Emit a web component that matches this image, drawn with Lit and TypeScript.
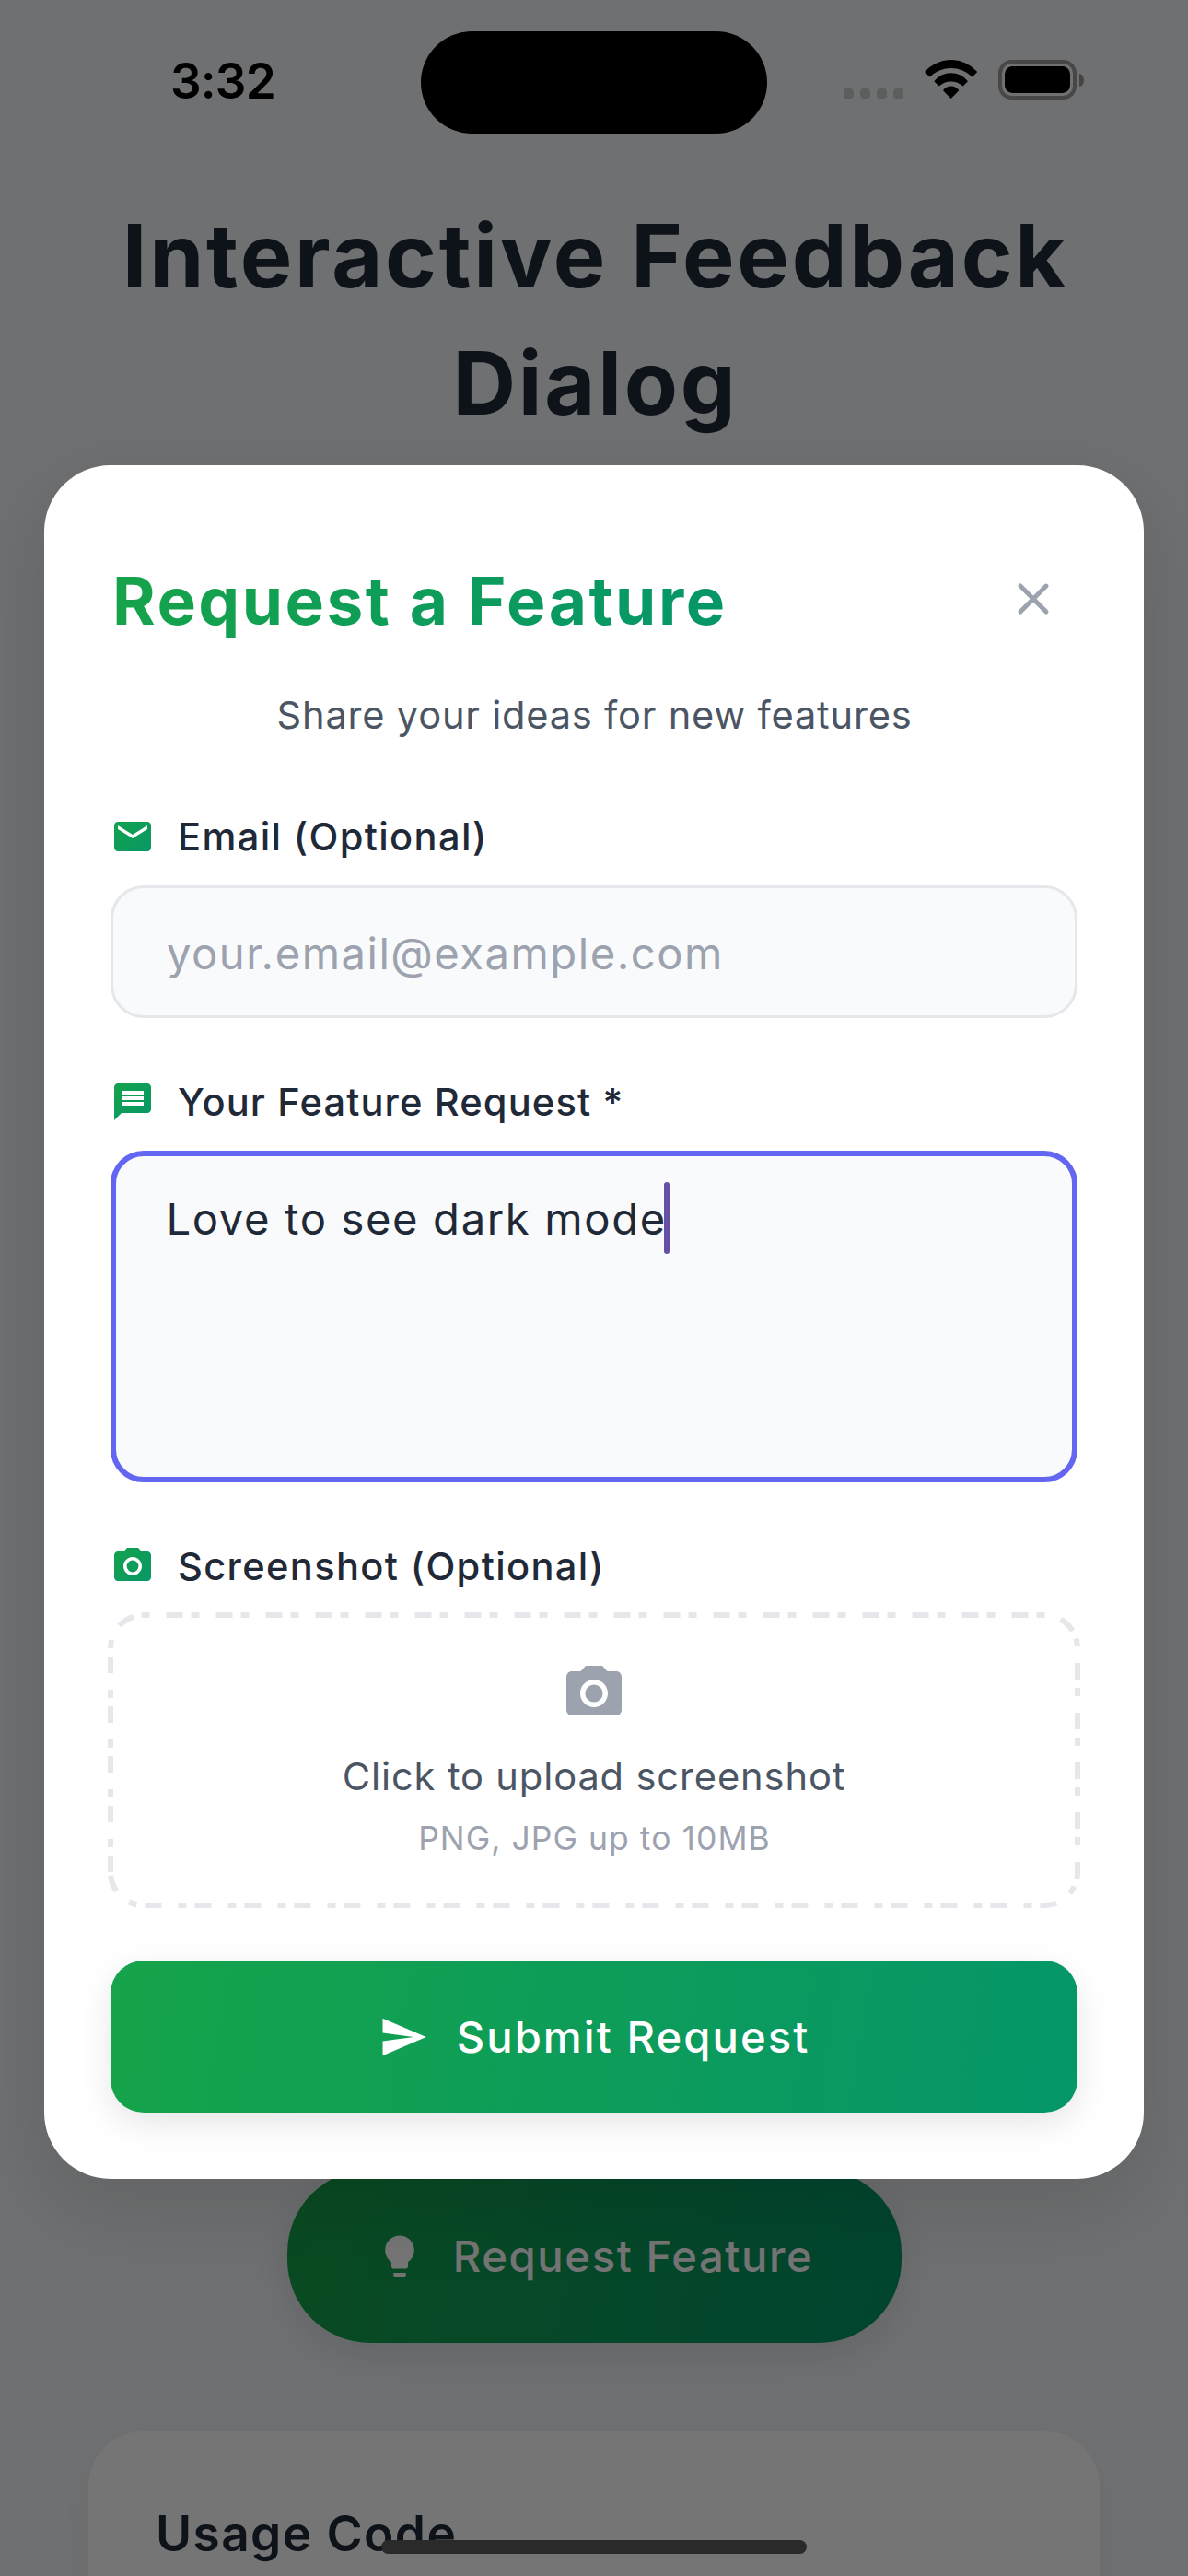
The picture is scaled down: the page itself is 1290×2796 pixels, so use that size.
import { LitElement, html, css, svg } from "lit";
import { customElement } from "lit/decorators.js";

const MAIL =
  "M20 4H4c-1.1 0-1.99.9-1.99 2L2 18c0 1.1.9 2 2 2h16c1.1 0 2-.9 2-2V6c0-1.1-.9-2-2-2zm0 4l-8 5-8-5V6l8 5 8-5v2z";
const MESSAGE =
  "M20 2H4c-1.1 0-1.99.9-1.99 2L2 22l4-4h14c1.1 0 2-.9 2-2V4c0-1.1-.9-2-2-2zm-2 12H6v-2h12v2zm0-3H6V9h12v2zm0-3H6V6h12v2z";
const CAMERA =
  "M12 8.8a3.2 3.2 0 1 0 0 6.4a3.2 3.2 0 1 0 0-6.4zM9 2L7.17 4H4c-1.1 0-2 .9-2 2v12c0 1.1.9 2 2 2h16c1.1 0 2-.9 2-2V6c0-1.1-.9-2-2-2h-3.17L15 2H9zm3 15c-2.76 0-5-2.24-5-5s2.24-5 5-5 5 2.24 5 5-2.24 5-5 5z";
const SEND = "M2.01 21L23 12 2.01 3 2 10l15 2-15 2z";
const BULB =
  "M9 21c0 .55.45 1 1 1h4c.55 0 1-.45 1-1v-1H9v1zm3-19C8.14 2 5 5.14 5 9c0 2.38 1.19 4.47 3 5.74V17c0 .55.45 1 1 1h6c.55 0 1-.45 1-1v-2.26c1.81-1.27 3-3.36 3-5.74 0-3.86-3.14-7-7-7z";
const CLOSE =
  "M18.3 5.71a.996.996 0 0 0-1.41 0L12 10.59 7.11 5.7A.996.996 0 1 0 5.7 7.11L10.59 12 5.7 16.89a.996.996 0 1 0 1.41 1.41L12 13.41l4.89 4.89a.996.996 0 1 0 1.41-1.41L13.41 12l4.89-4.89c.38-.38.38-1.02 0-1.4z";

const icon = (d: string, cls: string) =>
  html`<svg class=${cls} viewBox="0 0 24 24" aria-hidden="true"><path d=${d}></path></svg>`;

/* Label icon filled with the brand gradient, running corner to corner. */
const gradientIcon = (d: string, id: string) => html`<svg
  class="icon-label"
  viewBox="0 0 24 24"
  aria-hidden="true"
>
  ${svg`<defs><linearGradient id=${id} gradientUnits="userSpaceOnUse" x1="0" y1="0" x2="24" y2="24">
    <stop offset="0" stop-color="#16a34a"></stop><stop offset="1" stop-color="#059669"></stop>
  </linearGradient></defs><path d=${d} fill="url(#${id})"></path>`}
</svg>`;

@customElement("status-bar")
export class StatusBar extends LitElement {
  static styles = css`
    :host {
      display: flex;
      align-items: flex-start;
      height: 177px;
      color: #000;
      font-family: Inter, "Liberation Sans", sans-serif;
    }
    .time {
      width: 272px;
      padding: 57px 0 0 185px;
      font-size: 53px;
      font-weight: 600;
      line-height: 62px;
      letter-spacing: -0.9px;
    }
    .island {
      width: 376px;
      height: 111px;
      margin-top: 33.5px;
      border-radius: 56px;
      background: #000;
    }
    .tray {
      display: flex;
      align-items: flex-end;
      height: 43px;
      margin: 65px 0 0 83px;
    }
    .dots {
      display: flex;
      gap: 7px;
      margin-bottom: 1px;
    }
    .dots i {
      width: 11px;
      height: 11px;
      border-radius: 4px;
      background: #5c5e5e;
    }
    .wifi {
      width: 57.3px;
      height: 42px;
      margin: 0 0 1px 22.7px;
    }
    .battery {
      box-sizing: border-box;
      width: 85px;
      height: 43px;
      margin-left: 23px;
      padding: 3px;
      border: 4px solid #474747;
      border-radius: 14.5px;
    }
    .charge {
      height: 29px;
      border-radius: 8.5px;
      background: #000;
    }
    .nub {
      width: 5px;
      height: 14px;
      margin: 0 0 14px 3px;
      border-radius: 0 5px 5px 0 / 0 7px 7px 0;
      background: #444;
    }
  `;
  render() {
    return html`
      <div class="time">3:32</div>
      <div class="island"></div>
      <div class="tray">
        <div class="dots"><i></i><i></i><i></i><i></i></div>
        <svg class="wifi" viewBox="0 0 57.3 42">
          <path d="M0 13A38 38 0 0 1 57.3 13L51.8 18.4A33.2 33.2 0 0 0 5.5 18.4Z"></path>
          <path d="M10.3 23.3A23.1 23.1 0 0 1 47 23.3L41.7 28.6A19 19 0 0 0 15.6 28.6Z"></path>
          <path d="M20 33.3A10.3 10.3 0 0 1 37.3 33.3L28.65 42Z"></path>
        </svg>
        <div class="battery"><div class="charge"></div></div>
        <div class="nub"></div>
      </div>
    `;
  }
}

@customElement("feature-dialog")
export class FeatureDialog extends LitElement {
  static styles = css`
    :host {
      box-sizing: border-box;
      display: flex;
      flex-direction: column;
      width: 1194px;
      padding: 72px;
      border-radius: 72px;
      background: #fff;
      box-shadow: 0 30px 90px rgba(0, 0, 0, 0.12);
      font-family: Inter, "Liberation Sans", sans-serif;
      color: #1f2937;
    }
    .header {
      display: flex;
      align-items: center;
      justify-content: space-between;
      height: 146px;
    }
    .title {
      margin: 3px 0 0 2px;
      font-size: 71.2px;
      font-weight: 700;
      line-height: 100px;
      letter-spacing: 2.5px;
      white-space: nowrap;
      color: transparent;
      background: linear-gradient(98.6deg, #16a34a, #059669);
      -webkit-background-clip: text;
      background-clip: text;
    }
    .close {
      display: flex;
      align-items: center;
      justify-content: center;
      width: 96px;
      height: 96px;
    }
    .icon-close {
      width: 60px;
      height: 60px;
      fill: #9ca3af;
    }
    .subtitle {
      margin: 22.7px 0 0;
      padding-left: 1px;
      font-size: 41.6px;
      line-height: 60px;
      letter-spacing: 0.78px;
      text-align: center;
      color: #4b5563;
    }
    .label {
      display: flex;
      align-items: center;
      gap: 25px;
      height: 48px;
      font-size: 41.6px;
      font-weight: 500;
      line-height: 48px;
      letter-spacing: 1.35px;
    }
    .label.email {
      margin-top: 78px;
    }
    .label.request {
      margin-top: 66.5px;
      letter-spacing: 1.13px;
    }
    .label.shot {
      margin-top: 66.5px;
    }
    .icon-label {
      width: 48px;
      height: 48px;
    }
    .field {
      box-sizing: border-box;
      margin-top: 29px;
      border: 3px solid #e5e7eb;
      border-radius: 36px;
      background: #f9fafb;
      font-size: 47.2px;
      line-height: 78px;
    }
    .input {
      height: 144.5px;
      padding: 32px 58px 0;
      letter-spacing: 1.49px;
      color: #9ca3af;
    }
    .textarea {
      display: flex;
      align-items: flex-start;
      height: 360.5px;
      padding: 28px 54.5px 0;
      border: 6px solid #6366f1;
      letter-spacing: 1.62px;
    }
    .textarea span {
      padding-top: 1px;
    }
    .caret {
      width: 6px;
      height: 78px;
      margin-left: -3px;
      border-radius: 3px;
      background: #6750a4;
    }
    .upload {
      position: relative;
      box-sizing: border-box;
      display: flex;
      flex-direction: column;
      align-items: center;
      height: 315px;
      margin-top: 29.5px;
      padding-top: 48.5px;
    }
    .dashes {
      position: absolute;
      left: -3px;
      top: -3px;
      width: 1056px;
      height: 321px;
      fill: none;
      stroke: #e5e7eb;
      stroke-width: 6;
      stroke-dasharray: 18 9 9 18;
    }
    .icon-upload {
      width: 72px;
      height: 72px;
      fill: #9ca3af;
    }
    .upload-text {
      margin-top: 24px;
      font-size: 41.6px;
      line-height: 60px;
      letter-spacing: 0.88px;
      color: #4b5563;
    }
    .upload-hint {
      margin-top: 13px;
      padding-left: 1px;
      font-size: 35.5px;
      line-height: 50px;
      letter-spacing: 1.04px;
      color: #9ca3af;
    }
    .submit {
      display: flex;
      align-items: center;
      justify-content: center;
      gap: 31px;
      height: 165px;
      margin-top: 59.8px;
      border-radius: 36px;
      background: linear-gradient(98.9deg, #16a34a, #059669);
      box-shadow: 0 12px 36px rgba(0, 0, 0, 0.1);
      font-size: 47.2px;
      font-weight: 500;
      line-height: 60px;
      letter-spacing: 2.06px;
      color: #fff;
    }
    .icon-button {
      width: 54px;
      height: 54px;
      fill: currentColor;
    }
  `;
  render() {
    return html`
      <div class="header">
        <div class="title">Request a Feature</div>
        <div class="close">${icon(CLOSE, "icon-close")}</div>
      </div>
      <div class="subtitle">Share your ideas for new features</div>
      <div class="label email">${gradientIcon(MAIL, "g-mail")}<span>Email (Optional)</span></div>
      <div class="field input">your.email@example.com</div>
      <div class="label request">${gradientIcon(MESSAGE, "g-message")}<span>Your Feature Request *</span></div>
      <div class="field textarea"><span>Love to see dark mode</span><i class="caret"></i></div>
      <div class="label shot">${gradientIcon(CAMERA, "g-camera")}<span>Screenshot (Optional)</span></div>
      <div class="upload">
        <svg class="dashes" viewBox="0 0 1056 321" aria-hidden="true">
          <path
            d="M3 282V39A36 36 0 0 1 39 3H1017A36 36 0 0 1 1053 39V282A36 36 0 0 1 1017 318H39A36 36 0 0 1 3 282"
          ></path>
        </svg>
        ${icon(CAMERA, "icon-upload")}
        <div class="upload-text">Click to upload screenshot</div>
        <div class="upload-hint">PNG, JPG up to 10MB</div>
      </div>
      <div class="submit">${icon(SEND, "icon-button")}<span>Submit Request</span></div>
    `;
  }
}

@customElement("app-root")
export class AppRoot extends LitElement {
  static styles = css`
    :host {
      position: relative;
      display: block;
      width: 1290px;
      height: 2796px;
      overflow: hidden;
      background: #f2f4f7;
      font-family: Inter, "Liberation Sans", sans-serif;
      color: #1f2937;
    }
    .page {
      display: flex;
      flex-direction: column;
      align-items: center;
      height: 2796px;
      overflow: hidden;
    }
    .heading {
      margin: 208.5px 0 0;
      padding-left: 3px;
      font-size: 95px;
      font-weight: 700;
      line-height: 138.3px;
      letter-spacing: 2.74px;
      text-align: center;
    }
    .request {
      flex: none;
      display: flex;
      align-items: center;
      justify-content: center;
      gap: 31px;
      width: 667px;
      height: 188px;
      margin-top: 1869.9px;
      border-radius: 90px;
      background: linear-gradient(105.7deg, #16a34a, #059669);
      box-shadow: 0 15px 45px rgba(0, 0, 0, 0.1);
      font-size: 47.2px;
      font-weight: 500;
      line-height: 60px;
      letter-spacing: 1.59px;
      color: #fff;
    }
    .icon-button {
      width: 54px;
      height: 54px;
      fill: currentColor;
    }
    .card {
      flex: none;
      box-sizing: border-box;
      width: 1098px;
      height: 600px;
      margin-top: 96px;
      padding: 72px 73px;
      border-radius: 60px;
      background: #fff;
      box-shadow: 0 12px 45px rgba(0, 0, 0, 0.05);
    }
    .card-title {
      margin: 0;
      font-size: 53.2px;
      font-weight: 600;
      line-height: 78px;
      letter-spacing: 1.4px;
    }
    .scrim {
      position: absolute;
      inset: 0;
      display: flex;
      flex-direction: column;
      align-items: center;
      padding-top: 505.3px;
      background: rgba(0, 0, 0, 0.54);
    }
    status-bar {
      position: absolute;
      inset: 0 0 auto 0;
    }
    .home {
      position: absolute;
      left: 414px;
      bottom: 24px;
      width: 462px;
      height: 15px;
      border-radius: 8px;
      background: #2a2a2a;
    }
  `;
  render() {
    return html`
      <div class="page">
        <h1 class="heading">Interactive Feedback<br />Dialog</h1>
        <div class="request">${icon(BULB, "icon-button")}<span>Request Feature</span></div>
        <div class="card"><h2 class="card-title">Usage Code</h2></div>
      </div>
      <div class="scrim"><feature-dialog></feature-dialog></div>
      <status-bar></status-bar>
      <div class="home"></div>
    `;
  }
}
